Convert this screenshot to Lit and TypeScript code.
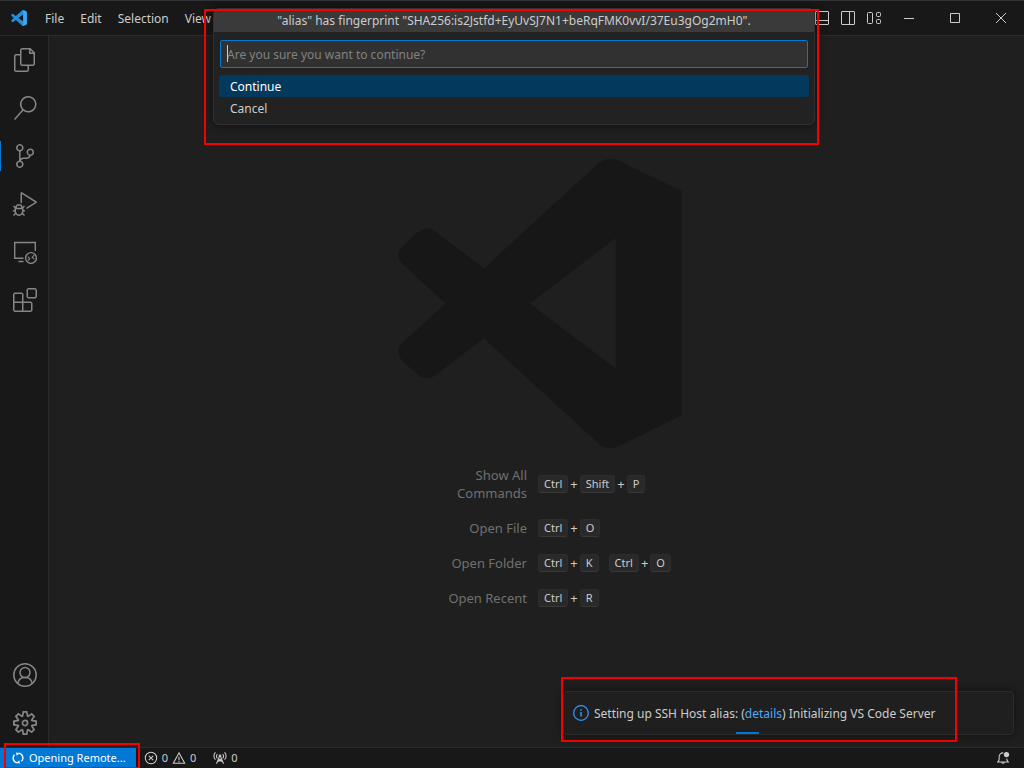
import { LitElement, html, css, svg } from "lit";
import { customElement } from "lit/decorators.js";

const LOGO =
  "M313 357L655 43Q684 19 718 34L906 126V797L718 889Q684 905 655 880L313 567L163 680Q141 695 117 677L68 633Q45 607 68 580L198 462L68 343Q45 318 68 291L117 246Q141 228 163 243ZM708 266L450 462L708 657Z";

const FILES =
  "M17.5 0h-9L7 1.5V6H2.5L1 7.5v15.07L2.5 24h12.07L16 22.57V18h4.7l1.3-1.43V4.5L17.5 0zm0 2.12l2.38 2.38H17.5V2.12zm-3 20.38h-12v-15H7v9.07L8.5 18h6v4.5zm6-6h-12v-15H16V6h4.5v10.5z";
const SEARCH =
  "M15.25 0a8.25 8.25 0 0 0-6.18 13.72L1 22.88l1.12 1 8.05-9.12A8.251 8.251 0 1 0 15.25.01V0zm0 15a6.75 6.75 0 1 1 0-13.5 6.75 6.75 0 0 1 0 13.5z";
const SCM =
  "M21.007 8.222A3.738 3.738 0 0 0 15.045 5.2a3.737 3.737 0 0 0 1.156 6.583 2.988 2.988 0 0 1-2.668 1.67h-2.99a4.456 4.456 0 0 0-2.989 1.165V7.4a3.737 3.737 0 1 0-1.494 0v9.117a3.776 3.776 0 1 0 1.816.099 2.99 2.99 0 0 1 2.668-1.667h2.99a4.484 4.484 0 0 0 4.223-3.039 3.736 3.736 0 0 0 3.25-3.687zM4.565 3.738a2.242 2.242 0 1 1 4.484 0 2.242 2.242 0 0 1-4.484 0zm4.484 16.441a2.242 2.242 0 1 1-4.484 0 2.242 2.242 0 0 1 4.484 0zm8.221-9.715a2.242 2.242 0 1 1 0-4.485 2.242 2.242 0 0 1 0 4.485z";
const DEBUG =
  "M10.94 13.5l-1.32 1.32a3.73 3.73 0 0 0-7.24 0L1.06 13.5 0 14.56l1.72 1.72-.22.22V18H0v1.5h1.5v.08c.077.489.214.966.41 1.42L0 22.94 1.06 24l1.65-1.65A4.308 4.308 0 0 0 6 24a4.31 4.31 0 0 0 3.29-1.65L10.94 24 12 22.94 10.09 21c.198-.464.336-.951.41-1.45v-.1H12V18h-1.5v-1.5l-.22-.22L12 14.56l-1.06-1.06zM6 13.5a2.25 2.25 0 0 1 2.25 2.25h-4.5A2.25 2.25 0 0 1 6 13.5zm3 6a3.33 3.33 0 0 1-3 3 3.33 3.33 0 0 1-3-3v-2.25h6v2.25zm14.76-9.9v1.26L13.5 17.37V15.6l8.5-5.37L9 2v9.46a5.07 5.07 0 0 0-1.5-.72V.63L8.64 0l15.12 9.6z";
const EXTENSIONS =
  "M13.5 1.5L15 0h7.5L24 1.5V9l-1.5 1.5H15L13.5 9V1.5zm1.5 0V9h7.5V1.5H15zM0 15V6l1.5-1.5H9L10.5 6v7.5H18l1.5 1.5v7.5L18 24H1.5L0 22.5V15zm9-1.5V6H1.5v7.5H9zM9 15H1.5v7.5H9V15zm1.5 7.5H18V15h-7.5v7.5z";
const GEAR =
  "M19.85 8.75l4.15.83v4.84l-4.15.83 2.35 3.52-3.43 3.43-3.52-2.35-.83 4.15H9.58l-.83-4.15-3.52 2.35-3.43-3.43 2.35-3.52L0 14.42V9.58l4.15-.83L1.8 5.23 5.23 1.8l3.52 2.35L9.58 0h4.84l.83 4.15 3.52-2.35 3.43 3.43-2.35 3.52zm-1.57 5.07l4-.81v-2l-4-.81-.54-1.3 2.29-3.43-1.43-1.43-3.43 2.29-1.3-.54-.81-4h-2l-.81 4-1.3.54-3.43-2.29-1.43 1.43L6.38 8.9l-.54 1.3-4 .81v2l4 .81.54 1.3-2.29 3.43 1.43 1.43 3.43-2.29 1.3.54.81 4h2l.81-4 1.3-.54 3.43 2.29 1.43-1.43-2.29-3.43.54-1.3zm-8.186-4.672A3.43 3.43 0 0 1 12 8.57 3.44 3.44 0 0 1 15.43 12a3.43 3.43 0 1 1-5.336-2.852zm.956 4.274c.281.188.612.288.95.288A1.7 1.7 0 0 0 13.71 12a1.71 1.71 0 1 0-2.66 1.422z";

const filled = (d: string) => svg`<path fill="currentColor" fill-rule="evenodd" d=${d}></path>`;

const remoteIcon = svg`<g fill="none" stroke="currentColor" stroke-width="1.4">
  <path d="M10.5 18.2H1.7V2.500h20.600v8.600M5.500 21.500h5"></path>
  <circle cx="18" cy="18" r="5.400"></circle>
  <path stroke-width="1.100" d="M14.800 16.700l2 2-2 2M21.200 15.200l-2 2 2 2"></path></g>`;
const accountIcon = svg`<g fill="none" stroke="currentColor" stroke-width="1.5">
  <circle cx="12" cy="12" r="11.2"></circle><circle cx="12" cy="9.6" r="5"></circle>
  <path d="M4.8 20.4c.6-3.500 3.600-5.800 7.200-5.800s6.600 2.300 7.200 5.800"></path></g>`;

const views = [
  { label: "Explorer", icon: filled(FILES) },
  { label: "Search", icon: filled(SEARCH) },
  { label: "Source Control", icon: filled(SCM), active: true },
  { label: "Run and Debug", icon: filled(DEBUG) },
  { label: "Remote Explorer", icon: remoteIcon },
  { label: "Extensions", icon: filled(EXTENSIONS) },
];
const globals = [
  { label: "Accounts", icon: accountIcon },
  { label: "Manage", icon: filled(GEAR) },
];

const shortcuts: { label: string; chords: string[][] }[] = [
  { label: "Show All Commands", chords: [["Ctrl", "Shift", "P"]] },
  { label: "Open File", chords: [["Ctrl", "O"]] },
  { label: "Open Folder", chords: [["Ctrl", "K"], ["Ctrl", "O"]] },
  { label: "Open Recent", chords: [["Ctrl", "R"]] },
];

@customElement("app-root")
export class AppRoot extends LitElement {
  static styles = css`
    :host {
      display: flex;
      flex-direction: column;
      position: relative;
      height: 100vh;
      overflow: hidden;
      box-sizing: border-box;
      background: #1f1f1f;
      color: #cccccc;
      font: 12px/18px "Noto Sans", "Open Sans", sans-serif;
    }
    * { box-sizing: border-box; }
    svg { display: block; flex: none; }
    button {
      font: inherit;
      color: inherit;
      background: none;
      border: 0;
      padding: 0;
      margin: 0;
    }
    .titlebar {
      display: flex;
      flex: none;
      height: 36px;
      background: #181818;
      border-top: 1px solid #333333;
      border-bottom: 1px solid #2b2b2b;
      padding-left: 11px;
      align-items: center;
    }
    .menu { display: flex; margin-left: 10px; }
    .menu button { padding: 2px 8px 0; }
    .layout { display: flex; gap: 10px; margin-left: auto; }
    .window { display: flex; margin-left: 4px; }
    .window button {
      width: 46px;
      height: 34px;
      display: grid;
      place-items: center;
    }
    .body { display: flex; flex: 1; min-height: 0; }
    .activity {
      display: flex;
      flex-direction: column;
      width: 49px;
      flex: none;
      background: #181818;
      border-right: 1px solid #2b2b2b;
      color: #868686;
    }
    .activity button {
      height: 48px;
      padding-left: 12px;
      border-left: 1px solid transparent;
    }
    .activity button.active {
      border-image: linear-gradient(transparent 10px, #0078d4 10px, #0078d4 38px, transparent 38px) 1;
    }
    .spacer { flex: 1; }
    .editor {
      flex: 1;
      display: flex;
      flex-direction: column;
      align-items: center;
      padding-top: 123px;
    }
    .mark { margin-left: 7px; }
    .keys {
      display: grid;
      grid-template-columns: 100px 150px;
      column-gap: 11px;
      row-gap: 17px;
      margin: 18px 0 0 42px;
      align-items: center;
      font-size: 13px;
    }
    .keys dt { text-align: right; color: #707070; }
    .keys dd {
      margin: 0;
      display: flex;
      gap: 10px;
    }
    .chord { display: flex; gap: 2px; }
    kbd {
      font: 11px/16px "Noto Sans", "Open Sans", sans-serif;
      background: #292929;
      border: 1px solid #2d2d2d;
      border-bottom-color: #383838;
      border-radius: 3px;
      padding: 0 5px;
    }
    .status {
      display: flex;
      flex: none;
      align-items: stretch;
      height: 21px;
      background: #181818;
      border-top: 1px solid #2b2b2b;
      font-size: 11px;
    }
    .status button { display: flex; align-items: center; gap: 4px; }
    .status .remote {
      background: #0078d4;
      color: #ffffff;
      padding: 0 10px 0 11px;
    }
    .problems { margin-left: 8px; }
    .ports { margin-left: 17px; }
    .status .bell { margin-left: auto; padding-right: 14px; }

    .quick {
      position: absolute;
      top: 8px;
      left: calc(50% - 299px);
      width: 602px;
      height: 117px;
      background: #222222;
      border: 1px solid #313131;
      border-radius: 6px;
      box-shadow: 0 0 8px 2px rgba(0, 0, 0, 0.36);
      overflow: hidden;
    }
    .quick h2 {
      margin: 0;
      padding: 3px 0 2px;
      background: #3a3a3a;
      font: 12px/18px "Noto Sans", "Open Sans", sans-serif;
      text-align: center;
    }
    .quick input {
      display: block;
      width: calc(100% - 12px);
      height: 28px;
      margin: 8px 6px 7px;
      padding: 0 6px;
      background: #313131;
      border: 1px solid #0078d4;
      border-radius: 2px;
      outline: none;
      color: #cccccc;
      font: inherit;
    }
    .quick input::placeholder { color: #818181; opacity: 1; }
    .caret {
      position: absolute;
      top: 36px;
      left: 13px;
      width: 1px;
      height: 17px;
      background: #cccccc;
    }
    .options { margin: 0 5px; }
    .options button {
      display: block;
      width: 100%;
      height: 22px;
      padding: 2px 11px 0;
      border-radius: 3px;
      text-align: left;
    }
    .options .selected { background: #04395e; color: #ffffff; }

    .toast {
      position: absolute;
      right: 10px;
      bottom: 33px;
      width: 451px;
      height: 44px;
      display: flex;
      align-items: center;
      gap: 4px;
      padding-left: 8px;
      background: #1f1f1f;
      border: 1px solid #2b2b2b;
      border-radius: 4px;
      box-shadow: 0 0 8px 2px rgba(0, 0, 0, 0.36);
    }
    .message { padding-top: 2px; }
    .toast a { color: #4daafc; text-decoration: none; }
    .progress {
      position: absolute;
      left: 172px;
      bottom: 0;
      width: 23px;
      height: 2px;
      background: #0078d4;
    }
    .frame {
      position: absolute;
      border: 2px solid #f50000;
      pointer-events: none;
    }
    .frame-quick { left: calc(50% - 308px); top: 9px; width: 615px; height: 136px; }
    .frame-toast { right: 67px; bottom: 26px; width: 396px; height: 65px; }
    .frame-remote { left: 4px; bottom: -1px; width: 136px; height: 26px; }
  `;

  private activityItem(item: { label: string; icon: unknown; active?: boolean }) {
    return html`<button class=${item.active ? "active" : ""} aria-label=${item.label}>
      <svg width="24" height="24" viewBox="0 0 24 24">${item.icon}</svg>
    </button>`;
  }

  render() {
    return html`
      <header class="titlebar">
        <svg width="16" height="16" viewBox="56 29 850 866">
          <path fill="#1f8fdc" fill-rule="evenodd" d=${LOGO}></path>
          <path fill="#3aa8f5" d="M708 48L718 34L906 126V797L708 893Z"></path>
        </svg>
        <nav class="menu">
          ${["File", "Edit", "Selection", "View"].map((m) => html`<button>${m}</button>`)}
        </nav>
        <div class="layout">
          <button aria-label="Toggle Panel">
            <svg width="16" height="16" viewBox="0 0 16 16" fill="none" stroke="currentColor"><rect x="1.500" y="1.500" width="13" height="13" rx=".5"></rect><path d="M2 10.500h12"></path></svg>
          </button>
          <button aria-label="Toggle Secondary Side Bar">
            <svg width="16" height="16" viewBox="0 0 16 16" fill="none" stroke="currentColor"><rect x="1.500" y="1.500" width="13" height="13" rx=".5"></rect><path d="M9.500 2v12"></path></svg>
          </button>
          <button aria-label="Customize Layout">
            <svg width="16" height="16" viewBox="0 0 16 16" fill="none" stroke="currentColor"><rect x="1.500" y="2.500" width="5" height="11" rx="1"></rect><rect x="10.500" y="2.500" width="4" height="4" rx="1"></rect><rect x="10.500" y="9.500" width="4" height="4" rx="1"></rect></svg>
          </button>
        </div>
        <div class="window">
          <button aria-label="Minimize"><svg width="10" height="10" stroke="currentColor"><path d="M0 5.500h10"></path></svg></button>
          <button aria-label="Maximize"><svg width="10" height="10" fill="none" stroke="currentColor"><path d="M.5.5h9v9h-9z"></path></svg></button>
          <button aria-label="Close"><svg width="10" height="10" stroke="currentColor"><path d="M0 0l10 10M10 0L0 10"></path></svg></button>
        </div>
      </header>

      <div class="body">
        <nav class="activity">
          ${views.map((v) => this.activityItem(v))}
          <div class="spacer"></div>
          ${globals.map((v) => this.activityItem(v))}
        </nav>
        <main class="editor">
          <svg class="mark" width="284" height="289" viewBox="56 29 850 866">
            <path fill="#171717" fill-rule="evenodd" d=${LOGO}></path>
          </svg>
          <dl class="keys">
            ${shortcuts.map(
              (s) => html`<dt>${s.label}</dt>
                <dd>
                  ${s.chords.map(
                    (c) => html`<span class="chord">${c.map((k, i) => html`${i ? html`<span>+</span>` : ""}<kbd>${k}</kbd>`)}</span>`
                  )}
                </dd>`
            )}
          </dl>
        </main>
      </div>

      <footer class="status">
        <button class="remote">
          <svg width="14" height="14" viewBox="0 0 16 16" fill="none" stroke="currentColor" stroke-width="1.500"><path d="M7.500 13.500A5.500 5.500 0 0 1 4 4.200M8.500 2.500a5.500 5.500 0 0 1 3.500 9.300"></path><path fill="currentColor" stroke="none" d="M5.800 1.500L9.300 3 6.500 5.500zM10.200 14.500L6.700 13 9.500 10.500z"></path></svg>
          <span>Opening Remote...</span>
        </button>
        <button class="problems">
          <svg width="14" height="14" viewBox="0 0 16 16" fill="none" stroke="currentColor" stroke-width="1.200"><circle cx="8" cy="8" r="6.500"></circle><path d="M5.500 5.500l5 5M10.500 5.500l-5 5"></path></svg>
          <span>0</span>
          <svg width="14" height="14" viewBox="0 0 16 16" fill="none" stroke="currentColor" stroke-width="1.200"><path d="M8 2L14.500 14h-13zM8 6.500v4M8 11.500v1.300"></path></svg>
          <span>0</span>
        </button>
        <button class="ports">
          <svg width="14" height="14" viewBox="0 0 16 16" fill="none" stroke="currentColor" stroke-width="1.200"><path d="M4 14.500L7.500 6h1L12 14.500M5.500 11.500h5M6.500 9l4 3M9.500 9l-4 3M5 8.500a3.500 3.500 0 0 1 0-5M11 8.500a3.500 3.500 0 0 0 0-5M2.800 10a6 6 0 0 1 0-8.500M13.200 10a6 6 0 0 0 0-8.500"></path><circle cx="8" cy="5.500" r="1"></circle></svg>
          <span>0</span>
        </button>
        <button class="bell" aria-label="Notifications">
          <svg width="14" height="14" viewBox="0 0 16 16" fill="none" stroke="currentColor" stroke-width="1.200"><path d="M8.500 2.200A4.300 4.300 0 0 0 3.600 6.500v3.500L2 12.500h12L12.400 10V8.500M6.500 13a1.600 1.600 0 0 0 3 0"></path><circle cx="12" cy="4" r="3" fill="currentColor" stroke="none"></circle></svg>
        </button>
      </footer>

      <section class="quick" role="dialog">
        <h2>"alias" has fingerprint "SHA256:is2Jstfd+EyUvSJ7N1+beRqFMK0vvI/37Eu3gOg2mH0".</h2>
        <input type="text" aria-label="Are you sure you want to continue?" placeholder="Are you sure you want to continue?" />
        <span class="caret"></span>
        <div class="options">
          <button class="selected">Continue</button>
          <button>Cancel</button>
        </div>
      </section>

      <section class="toast" role="status">
        <svg width="18" height="18" viewBox="0 0 16 16" fill="none" stroke="#3794ff" stroke-width="1.100"><circle cx="8" cy="8" r="6.500"></circle><path stroke-width="1.300" d="M8 7v4M8 4.700v1.300"></path></svg>
        <span class="message">Setting up SSH Host alias: (<a href="#details">details</a>) Initializing VS Code Server</span>
        <span class="progress"></span>
      </section>

      <div class="frame frame-quick"></div>
      <div class="frame frame-toast"></div>
      <div class="frame frame-remote"></div>
    `;
  }
}
